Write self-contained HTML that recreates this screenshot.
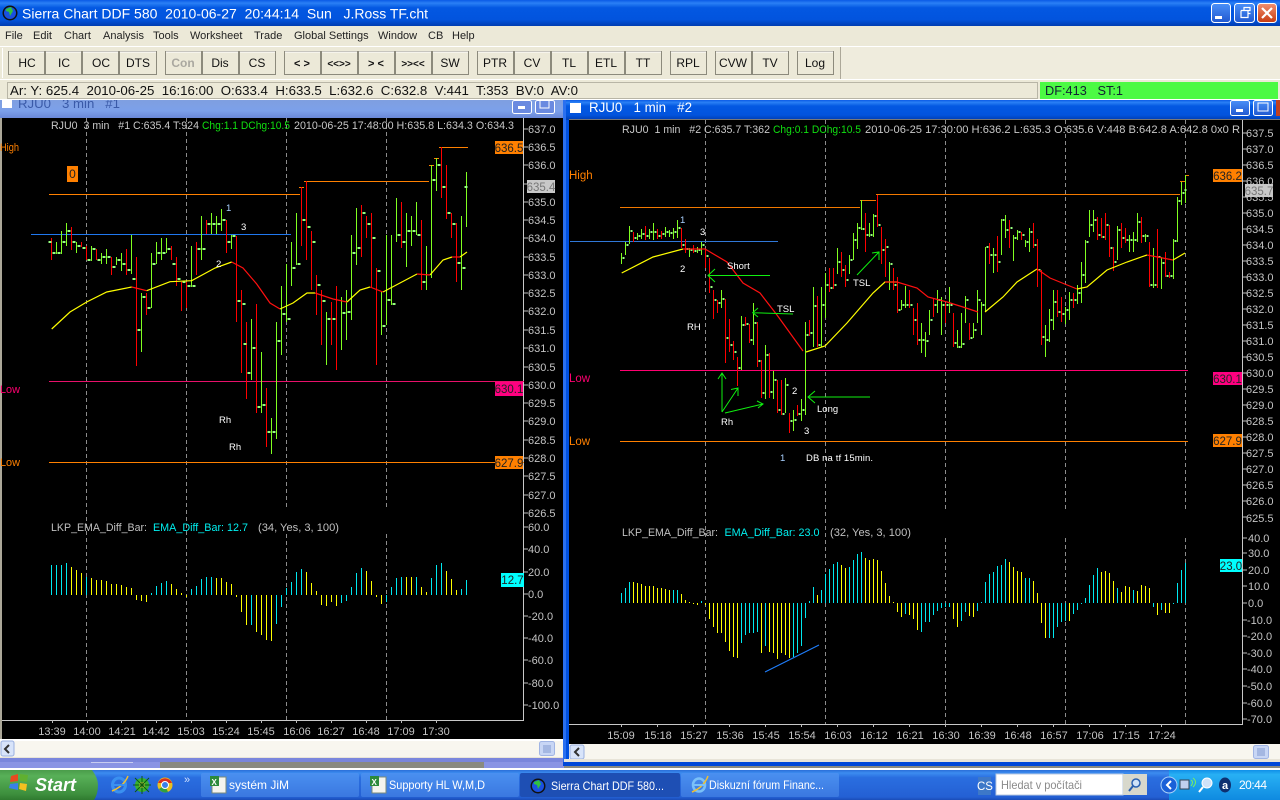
<!DOCTYPE html>
<html><head><meta charset="utf-8"><title>Sierra Chart</title>
<style>
html,body{margin:0;padding:0;background:#fff;overflow:hidden;width:1280px;height:800px}
svg{display:block;font-family:"Liberation Sans",sans-serif}
text{white-space:pre}
.a{font-size:11px;fill:#c4c4c4}
.t{font-size:11px;fill:#c4c4c4;text-anchor:middle}
.m{font-size:11px;fill:#222}
.b{font-size:12px;fill:#111;text-anchor:middle}
.w{font-size:9.5px;fill:#fff}
.tb{font-size:12px;fill:#fff}
.bx{font-size:11.5px;fill:#222;text-anchor:middle}
</style></head><body>
<svg width="1280" height="800" viewBox="0 0 1280 800" xmlns="http://www.w3.org/2000/svg">
<defs>
<linearGradient id="tg" x1="0" y1="0" x2="0" y2="1"><stop offset="0" stop-color="#0a5ae6"/><stop offset=".12" stop-color="#2a80f5"/><stop offset=".3" stop-color="#0358e2"/><stop offset=".75" stop-color="#0254de"/><stop offset="1" stop-color="#003cb0"/></linearGradient>
<linearGradient id="ti" x1="0" y1="0" x2="0" y2="1"><stop offset="0" stop-color="#7f9fe0"/><stop offset=".6" stop-color="#7ca0ea"/><stop offset="1" stop-color="#6a88d8"/></linearGradient>
<linearGradient id="tk" x1="0" y1="0" x2="0" y2="1"><stop offset="0" stop-color="#2a6ed8"/><stop offset=".1" stop-color="#3c8cf0"/><stop offset=".25" stop-color="#2a6ee0"/><stop offset=".9" stop-color="#2460d4"/><stop offset="1" stop-color="#1a4cb8"/></linearGradient>
<linearGradient id="st" x1="0" y1="0" x2="0" y2="1"><stop offset="0" stop-color="#4a9c4a"/><stop offset=".2" stop-color="#58b058"/><stop offset=".8" stop-color="#3d8f3d"/><stop offset="1" stop-color="#2f7a2f"/></linearGradient>
<linearGradient id="tr" x1="0" y1="0" x2="0" y2="1"><stop offset="0" stop-color="#0f8fe8"/><stop offset=".15" stop-color="#28b0f4"/><stop offset="1" stop-color="#0f8ae0"/></linearGradient>
<linearGradient id="bt" x1="0" y1="0" x2="0" y2="1"><stop offset="0" stop-color="#4a90f8"/><stop offset="1" stop-color="#2058d0"/></linearGradient>
<linearGradient id="cl" x1="0" y1="0" x2="0" y2="1"><stop offset="0" stop-color="#f09070"/><stop offset="1" stop-color="#c83a10"/></linearGradient>
<linearGradient id="tbn" x1="0" y1="0" x2="0" y2="1"><stop offset="0" stop-color="#4a90f0"/><stop offset="1" stop-color="#3a78e0"/></linearGradient>
</defs>

<rect width="1280" height="800" fill="#fff"/>
<!-- main frame -->
<rect x="0" y="0" width="1280" height="26" fill="url(#tg)"/>
<circle cx="10" cy="13" r="7.5" fill="#111"/><circle cx="10" cy="13" r="6" fill="#1a50e0"/><path d="M6 9l5-2 2 4-3 5-1-4-3-1z" fill="#30c040"/>
<text x="22" y="18.5" font-size="13.5" fill="#fff" textLength="406" lengthAdjust="spacingAndGlyphs">Sierra Chart DDF 580  2010-06-27  20:44:14  Sun   J.Ross TF.cht</text>
<g stroke="#fff" stroke-width="1">
<rect x="1211.5" y="3.5" width="19" height="19" rx="3" fill="url(#bt)"/>
<rect x="1234.5" y="3.5" width="20" height="19" rx="3" fill="url(#bt)"/>
<rect x="1257.5" y="3.5" width="19" height="19" rx="3" fill="url(#cl)"/>
</g>
<rect x="1215" y="16" width="7" height="3" fill="#fff"/>
<path d="M1241 10.500h9v-3h-6v3M1241 10.500v7h7v-7M1248 13.500h2.500" fill="none" stroke="#fff" stroke-width="1.200"/>
<path d="M1262 8l10 10M1272 8l-10 10" stroke="#fff" stroke-width="2.200"/>

<rect x="0" y="26" width="1280" height="20" fill="#ece9d8"/>
<g class="mm"><text class="m" x="5" y="39">File</text><text class="m" x="33" y="39">Edit</text><text class="m" x="64" y="39">Chart</text><text class="m" x="103" y="39">Analysis</text><text class="m" x="153" y="39">Tools</text><text class="m" x="190" y="39">Worksheet</text><text class="m" x="254" y="39">Trade</text><text class="m" x="294" y="39">Global Settings</text><text class="m" x="378" y="39">Window</text><text class="m" x="428" y="39">CB</text><text class="m" x="452" y="39">Help</text></g>

<rect x="0" y="46" width="1280" height="1" fill="#fff"/>
<rect x="0" y="47" width="1280" height="32" fill="#ece9d8"/>
<rect x="0" y="79" width="1280" height="1" fill="#fff"/>
<rect x="840" y="47" width="440" height="32" fill="#efecdd"/>
<rect x="840" y="47" width="1" height="32" fill="#aca899"/>
<rect x="2" y="48" width="1" height="30" fill="#fff"/>

<g fill="#ece9d8" stroke="#8c8a7c" stroke-width="1">
<path d="M8.500 51.500h36v23h-36z"/><path d="M45.500 51.500h36v23h-36z"/><path d="M82.500 51.500h36v23h-36z"/><path d="M119.500 51.500h37v23h-37z"/>
<path d="M165.500 51.500h36v23h-36z"/><path d="M202.500 51.500h36v23h-36z"/><path d="M239.500 51.500h36v23h-36z"/>
<path d="M284.500 51.500h36v23h-36z"/><path d="M321.500 51.500h36v23h-36z"/><path d="M358.500 51.500h36v23h-36z"/><path d="M395.500 51.500h36v23h-36z"/><path d="M432.500 51.500h36v23h-36z"/>
<path d="M477.500 51.500h36v23h-36z"/><path d="M514.500 51.500h36v23h-36z"/><path d="M551.500 51.500h36v23h-36z"/><path d="M588.500 51.500h36v23h-36z"/><path d="M625.500 51.500h36v23h-36z"/>
<path d="M670.500 51.500h36v23h-36z"/><path d="M715.500 51.500h36v23h-36z"/><path d="M752.500 51.500h36v23h-36z"/><path d="M797.500 51.500h36v23h-36z"/>
</g>
<path d="M9 52h35M46 52h35M83 52h35M120 52h36M166 52h35M203 52h35M240 52h35M285 52h35M322 52h35M359 52h35M396 52h35M433 52h35M478 52h35M515 52h35M552 52h35M589 52h35M626 52h35M671 52h35M716 52h35M753 52h35M798 52h35" stroke="#fff" stroke-width="1"/>
<text class="b" x="27" y="67">HC</text><text class="b" x="64" y="67">IC</text><text class="b" x="101" y="67">OC</text><text class="b" x="138" y="67">DTS</text>
<text class="b" x="183" y="67" style="fill:#aaa8a0;font-weight:bold">Con</text><text class="b" x="220" y="67">Dis</text><text class="b" x="257" y="67">CS</text>
<text class="b" x="302" y="67" style="font-weight:bold;font-size:11px">&lt; &gt;</text><text class="b" x="339" y="67" style="font-weight:bold;font-size:10px">&lt;&lt;&gt;&gt;</text><text class="b" x="376" y="67" style="font-weight:bold;font-size:11px">&gt; &lt;</text><text class="b" x="413" y="67" style="font-weight:bold;font-size:10px">&gt;&gt;&lt;&lt;</text><text class="b" x="450" y="67">SW</text>
<text class="b" x="495" y="67">PTR</text><text class="b" x="532" y="67">CV</text><text class="b" x="569" y="67">TL</text><text class="b" x="606" y="67">ETL</text><text class="b" x="643" y="67">TT</text>
<text class="b" x="688" y="67">RPL</text><text class="b" x="733" y="67">CVW</text><text class="b" x="770" y="67">TV</text><text class="b" x="815" y="67">Log</text>

<rect x="0" y="80" width="1280" height="20" fill="#ece9d8"/>
<rect x="7.500" y="82.500" width="1030" height="16" fill="#ece9d8" stroke="#b8b5a6"/>
<rect x="1040" y="82" width="238" height="17" fill="#4cfa44"/>
<rect x="0" y="99" width="1280" height="1" fill="#fff"/>
<text x="10" y="95" font-size="13" fill="#111" textLength="568" lengthAdjust="spacingAndGlyphs">Ar: Y: 625.4  2010-06-25  16:16:00  O:633.4  H:633.5  L:632.6  C:632.8  V:441  T:353  BV:0  AV:0</text>
<text x="1045" y="95" font-size="13" fill="#123" textLength="78" lengthAdjust="spacingAndGlyphs">DF:413   ST:1</text>

<!-- LEFT WINDOW -->
<rect x="0" y="100" width="564" height="668" fill="#8a8a80"/>
<rect x="0" y="100" width="564" height="18" fill="url(#ti)"/>
<clipPath id="c1"><rect x="0" y="100" width="564" height="18"/></clipPath>
<g clip-path="url(#c1)">
<rect x="2" y="100" width="10" height="8" fill="#fff"/>
<text x="18" y="108" font-size="13" fill="#3a5aa8" textLength="102" lengthAdjust="spacingAndGlyphs">RJU0   3 min   #1</text>
<rect x="512.500" y="100.500" width="19" height="13" rx="2" fill="#6a8ae0" stroke="#fff"/><rect x="518" y="106" width="7" height="3" fill="#fff"/>
<rect x="535.500" y="100.500" width="19" height="13" rx="2" fill="#6a8ae0" stroke="#fff"/><rect x="540" y="100" width="9" height="8" fill="none" stroke="#fff"/>
</g>
<rect x="0" y="118" width="2" height="622" fill="#aca899"/>
<rect x="2" y="118" width="562" height="621" fill="#000"/>
<rect x="0" y="739" width="564" height="18" fill="#f8f6ef"/>
<rect x="0" y="739" width="564" height="2" fill="#fff"/>
<rect x="1" y="741" width="13" height="15" rx="2" fill="#d8e4fa" stroke="#9ab0e0"/><path d="M9 745l-4 4 4 4" fill="none" stroke="#333" stroke-width="2"/>
<rect x="539.500" y="741.500" width="15" height="14" rx="2" fill="#c8d6f5" stroke="#a0b4e4"/><path d="M544 745v8M546 745v8M548 745v8M550 745v8" stroke="#8098d0"/>
<rect x="0" y="757" width="564" height="1" fill="#e8e4d8"/>
<rect x="0" y="758" width="564" height="4" fill="#7a86dc"/>
<rect x="0" y="762" width="160" height="6" fill="#8a94e4"/>
<rect x="484" y="762" width="80" height="6" fill="#8a94e4"/>
<rect x="91" y="762" width="42" height="1" fill="#c8ccf0"/>

<!-- left chart lines -->
<g shape-rendering="crispEdges">
<path d="M523.500 118V720M2 720.500H524" stroke="#c8c8c8" fill="none"/>
<path d="M524 129h4M524 147h4M524 165h4M524 184h4M524 202h4M524 220h4M524 238h4M524 257h4M524 275h4M524 293h4M524 311h4M524 330h4M524 348h4M524 367h4M524 385h4M524 403h4M524 421h4M524 440h4M524 458h4M524 476h4M524 495h4M524 513h4M524 527h4M524 549h4M524 572h4M524 594h4M524 616h4M524 638h4M524 660h4M524 683h4M524 705h4" stroke="#bbb"/>
<path d="M52.500 720v3M87.500 720v3M121.500 720v3M156.500 720v3M191.500 720v3M226.500 720v3M261.500 720v3M296.500 720v3M331.500 720v3M366.500 720v3M401.500 720v3M436.500 720v3" stroke="#bbb"/>
<path d="M86.500 118V720M186.500 118V720M286.500 118V510M286.500 534V720M386.500 118V510M386.500 534V720" stroke="#8c8c8c" stroke-dasharray="4 3"/>
<path d="M49 194.500H300M299 187.500h5M304 181.500H429M429 165.500h5M434 158.500h5M439 147.500h29" stroke="#ff8000" fill="none"/>
<path d="M306.500 181V260" stroke="#ff8000"/>
<path d="M31 234.500H291" stroke="#2078f0"/>
<path d="M49 381.500H524" stroke="#e8106a"/>
<path d="M49 462.500H524" stroke="#ff8000"/>
</g>
<g transform="translate(.5 0)" shape-rendering="crispEdges" fill="none">
<path stroke="#ff0000" d="M51 238V260M71 227V250M81 242V247M86 246V260M96 249V260M111 257V275M126 249V275M136 257V366M146 293V315M171 246V260M176 257V286M181 282V311M186 282V308M196 242V275M206 220V234M226 220V253M236 236V322M241 290V373M246 322V399M256 304V413M266 388V447M301 187V246M306 181V260M311 231V290M316 275V315M321 290V345M331 302V345M336 286V370M361 205V257M366 216V238M371 213V287M376 268V365M401 202V248M421 220V290M441 147V198M446 165V219M451 213V238M456 223V282"/>
<path stroke="#80ff20" d="M56 242V254M61 231V254M66 223V246M76 242V253M91 246V261M101 253V264M106 249V264M116 257V265M121 253V271M131 235V274M141 293V352M151 253V308M156 242V264M161 238V260M166 238V253M191 246V287M201 216V260M211 213V234M216 216V234M221 209V231M231 235V249M251 319V380M261 352V413M271 418V454M276 322V439M281 286V355M286 264V322M291 242V286M296 213V265M326 312V365M341 297V350M346 290V340M351 235V320M356 208V265M381 292V335M386 235V325M391 235V305M396 198V242M406 213V267M411 216V246M416 202V235M426 246V290M431 165V278M436 158V191M461 216V290M466 172V227"/>
<path stroke="#96ff80" stroke-width="2" d="M48 242h3M52 253h3M57 253h3M62 242h3M67 231h3M72 242h3M77 246h3M82 248h3M87 260h3M92 249h3M97 260h3M102 257h3M107 257h3M112 267h3M117 260h3M122 264h3M127 270h3M132 279h3M137 330h3M142 297h3M147 308h3M152 264h3M157 253h3M162 253h3M167 249h3M172 264h3M177 279h3M182 282h3M187 286h3M192 286h3M197 249h3M202 249h3M207 224h3M212 224h3M217 224h3M222 220h3M227 242h3M232 236h3M237 301h3M242 304h3M243 344h3M247 373h3M252 348h3M257 407h3M262 405h3M267 432h3M272 432h3M277 341h3M282 314h3M287 319h3M292 268h3M297 264h3M302 220h3M307 227h3M312 242h3M317 285h3M322 301h3M327 319h3M332 319h3M342 313h3M347 312h3M352 253h3M357 248h3M362 213h3M367 224h3M372 238h3M377 271h3M382 326h3M387 300h3M392 304h3M397 235h3M402 242h3M407 231h3M412 231h3M417 235h3M422 282h3M432 180h3M437 165h3M442 187h3M447 213h3M452 224h3M457 263h3M462 268h3M467 187h-3"/>
</g>
<!-- left EMA -->
<g fill="none" stroke-width="1.200">
<path stroke="#ffff00" d="M51.700 329L70 312L86.700 302L106.700 292L131.700 287"/>
<path stroke="#ff1010" d="M131.700 287L146.700 290.700"/>
<path stroke="#ffff00" d="M146.700 290.700L170 281.700L191.700 280.700L215 268L231.700 262"/>
<path stroke="#ff1010" d="M231.700 262L243 268L256.700 284L270 303L280 309"/>
<path stroke="#ffff00" d="M280 309L293 303L307 293L315 293"/>
<path stroke="#ff1010" d="M315 293L333 299L347 302"/>
<path stroke="#ffff00" d="M347 302L360 290L370 287"/>
<path stroke="#ff1010" d="M370 287L383 292"/>
<path stroke="#ffff00" d="M383 292L417 274"/>
<path stroke="#ff1010" d="M417 274L430 275"/>
<path stroke="#ffff00" d="M430 275L443 260L452 257"/>
<path stroke="#ff1010" d="M452 257L460 257"/>
<path stroke="#ffff00" d="M460 257L467 252"/>
</g>
<!-- left indicator -->
<g transform="translate(.5 0)" shape-rendering="crispEdges" fill="none">
<path stroke="#00e8f0" d="M51 595V565M56 595V565M61 595V565M66 595V563M86 595V577M151 595V593M156 595V586M161 595V583M166 595V581M191 595V589M196 595V586M201 595V579M206 595V577M211 595V577M251 595V625M276 595V624M281 595V607M286 595V588M291 595V582M296 595V572M301 595V569M341 595V603M346 595V601M351 595V587M356 595V573M361 595V568M386 595V602M391 595V587M396 595V578M401 595V577M416 595V577M431 595V578M436 595V565M441 595V563M461 595V589M466 595V580"/>
<path stroke="#ffff00" d="M71 595V567M76 595V570M81 595V573M91 595V578M96 595V580M101 595V580M106 595V581M111 595V584M116 595V584M121 595V585M126 595V587M131 595V588M136 595V600M141 595V601M146 595V602M171 595V584M176 595V589M181 595V593M186 595V597M216 595V578M221 595V578M226 595V582M231 595V584M236 595V597M241 595V612M246 595V625M256 595V632M261 595V635M266 595V640M271 595V641M306 595V572M311 595V583M316 595V591M321 595V605M326 595V606M331 595V602M336 595V606M366 595V571M371 595V581M376 595V597M381 595V604M406 595V577M411 595V577M421 595V587M426 595V592M446 595V571M451 595V579M456 595V590"/>
</g>
<!-- left texts -->
<text x="51" y="129" font-size="11" fill="#c8c8c8" textLength="148" lengthAdjust="spacingAndGlyphs">RJU0  3 min   #1 C:635.4 T:924</text>
<text x="202" y="129" font-size="11" fill="#10e010" textLength="88" lengthAdjust="spacingAndGlyphs">Chg:1.1 DChg:10.5</text>
<text x="294" y="129" font-size="11" fill="#c8c8c8" textLength="220" lengthAdjust="spacingAndGlyphs">2010-06-25 17:48:00 H:635.8 L:634.3 O:634.3</text>
<text x="0" y="151" font-size="11" fill="#ff8000" textLength="19" lengthAdjust="spacingAndGlyphs">High</text>
<text x="0" y="393" font-size="11" fill="#ff0070" textLength="20" lengthAdjust="spacingAndGlyphs">Low</text>
<text x="0" y="466" font-size="11" fill="#ff8000" textLength="20" lengthAdjust="spacingAndGlyphs">Low</text>
<rect x="67" y="166" width="11" height="16" fill="#ff8000"/><text x="72.500" y="178" font-size="12" fill="#222" text-anchor="middle">0</text>
<text class="w" x="226" y="211" style="fill:#a8d0ff">1</text><text class="w" x="241" y="230">3</text><text class="w" x="216" y="267">2</text><text class="w" x="219" y="423">Rh</text><text class="w" x="229" y="450">Rh</text>
<text x="51" y="531" font-size="11" fill="#c0c0c0" textLength="96" lengthAdjust="spacingAndGlyphs">LKP_EMA_Diff_Bar:</text>
<text x="153" y="531" font-size="11" fill="#00f0f0" textLength="95" lengthAdjust="spacingAndGlyphs">EMA_Diff_Bar: 12.7</text>
<text x="258" y="531" font-size="11" fill="#c0c0c0" textLength="81" lengthAdjust="spacingAndGlyphs">(34, Yes, 3, 100)</text>
<g>
<text class="a" x="528" y="133">637.0</text><text class="a" x="528" y="151">636.5</text><text class="a" x="528" y="169">636.0</text><text class="a" x="528" y="206">635.0</text><text class="a" x="528" y="224">634.5</text><text class="a" x="528" y="242">634.0</text><text class="a" x="528" y="261">633.5</text><text class="a" x="528" y="279">633.0</text><text class="a" x="528" y="297">632.5</text><text class="a" x="528" y="315">632.0</text><text class="a" x="528" y="334">631.5</text><text class="a" x="528" y="352">631.0</text><text class="a" x="528" y="371">630.5</text><text class="a" x="528" y="389">630.0</text><text class="a" x="528" y="407">629.5</text><text class="a" x="528" y="425">629.0</text><text class="a" x="528" y="444">628.5</text><text class="a" x="528" y="462">628.0</text><text class="a" x="528" y="480">627.5</text><text class="a" x="528" y="499">627.0</text><text class="a" x="528" y="517">626.5</text>
<text class="a" x="528" y="531">60.0</text><text class="a" x="528" y="553">40.0</text><text class="a" x="528" y="576">20.0</text><text class="a" x="528" y="598">0.0</text><text class="a" x="528" y="620">-20.0</text><text class="a" x="528" y="642">-40.0</text><text class="a" x="528" y="664">-60.0</text><text class="a" x="528" y="687">-80.0</text><text class="a" x="528" y="709">-100.0</text>
</g>
<rect x="495" y="141" width="28" height="13" fill="#ff8000"/><text class="bx" x="509" y="152">636.5</text>
<rect x="527" y="180" width="28" height="13" fill="#c8c8c8"/><text class="bx" x="541" y="191" style="fill:#777">635.4</text>
<rect x="495" y="382" width="28" height="14" fill="#ff0080"/><text class="bx" x="509" y="393">630.1</text>
<rect x="495" y="456" width="28" height="13" fill="#ff8000"/><text class="bx" x="509" y="467">627.9</text>
<rect x="501" y="573" width="23" height="14" fill="#00ffff"/><text class="bx" x="512.500" y="584">12.7</text>
<g>
<text class="t" x="52" y="735">13:39</text><text class="t" x="87" y="735">14:00</text><text class="t" x="122" y="735">14:21</text><text class="t" x="156" y="735">14:42</text><text class="t" x="191" y="735">15:03</text><text class="t" x="226" y="735">15:24</text><text class="t" x="261" y="735">15:45</text><text class="t" x="297" y="735">16:06</text><text class="t" x="331" y="735">16:27</text><text class="t" x="366" y="735">16:48</text><text class="t" x="401" y="735">17:09</text><text class="t" x="436" y="735">17:30</text>
</g>

<!-- RIGHT WINDOW -->
<rect x="563" y="100" width="717" height="666" fill="#0050e0"/>
<rect x="563" y="100" width="717" height="20" fill="url(#tg)"/>
<rect x="563" y="100" width="3" height="666" fill="#2a70f0"/>
<rect x="570" y="103" width="11" height="10" fill="#fff"/>
<text x="589" y="112" font-size="13.5" fill="#fff" textLength="103" lengthAdjust="spacingAndGlyphs">RJU0   1 min   #2</text>
<rect x="1230.500" y="100.500" width="19" height="15" rx="2" fill="url(#bt)" stroke="#fff"/><rect x="1236" y="109" width="7" height="3" fill="#fff"/>
<rect x="1253.500" y="100.500" width="19" height="15" rx="2" fill="url(#bt)" stroke="#fff"/><rect x="1258" y="103" width="10" height="8" fill="none" stroke="#fff"/>
<rect x="1276" y="100" width="4" height="16" fill="#c04020"/>
<rect x="569" y="120" width="711" height="624" fill="#000"/>
<rect x="569" y="119" width="711" height="1" fill="#777"/>
<rect x="569" y="744" width="711" height="15" fill="#f8f6ef"/>
<rect x="570" y="745" width="14" height="14" rx="2" fill="#d8e4fa" stroke="#9ab0e0"/><path d="M579 748l-4 4 4 4" fill="none" stroke="#333" stroke-width="2"/>
<rect x="1253.500" y="745.500" width="15" height="13" rx="2" fill="#c8d6f5" stroke="#a0b4e4"/><path d="M1258 748v8M1260 748v8M1262 748v8M1264 748v8" stroke="#8098d0"/>
<rect x="563" y="762" width="717" height="4" fill="#0048d8"/>
<rect x="564" y="759" width="716" height="3" fill="#e8e4d8"/>
<rect x="564" y="766" width="716" height="2" fill="#8a8a80"/>

<g shape-rendering="crispEdges">
<path d="M1242.500 120V724M569 724.500H1243" stroke="#c8c8c8" fill="none"/>
<path d="M1243 133h4M1243 149h4M1243 165h4M1243 181h4M1243 197h4M1243 213h4M1243 229h4M1243 245h4M1243 261h4M1243 277h4M1243 293h4M1243 309h4M1243 325h4M1243 341h4M1243 357h4M1243 373h4M1243 389h4M1243 405h4M1243 421h4M1243 437h4M1243 453h4M1243 469h4M1243 485h4M1243 501h4M1243 517h4M1243 538h4M1243 553h4M1243 570h4M1243 586h4M1243 603h4M1243 620h4M1243 636h4M1243 653h4M1243 669h4M1243 686h4M1243 703h4M1243 719h4" stroke="#bbb"/>
<path d="M621.500 724v3M657.500 724v3M693.500 724v3M729.500 724v3M765.500 724v3M801.500 724v3M837.500 724v3M873.500 724v3M909.500 724v3M945.500 724v3M981.500 724v3M1017.500 724v3M1053.500 724v3M1089.500 724v3M1125.500 724v3M1161.500 724v3" stroke="#bbb"/>
<path d="M705.500 120V724M825.500 120V724M945.500 120V511M945.500 538V724M1065.500 120V511M1065.500 538V724M1185.500 120V511M1185.500 538V724" stroke="#8c8c8c" stroke-dasharray="4 3"/>
<path d="M620 207.500H860M860 200.500h16M876 194.500H1180M1180 181.500h5M1185 175.500h4" stroke="#ff8000" stroke-opacity=".95" fill="none"/>
<path d="M570 241.500H778" stroke="#3078d8"/>
<path d="M620 370.500H1188" stroke="#ff0070"/>
<path d="M620 441.500H1188" stroke="#ff8000"/>
</g>
<g transform="translate(.5 0)" shape-rendering="crispEdges" fill="none">
<path stroke="#ff0000" d="M633 232V242M645 226V240M657 229V239M661 231V239M681 228V248M685 239V253M693 245V253M705 249V268M709 258V293M713 290V319M717 300V313M725 299V363M729 319V352M733 341V360M737 357V386M745 317V326M749 324V343M757 322V367M761 360V398M769 353V398M777 380V413M781 380V415M789 413V433M797 405V416M809 320V336M817 296V347M829 268V292M833 268V289M841 252V277M845 265V287M865 213V252M877 195V227M881 227V264M885 239V277M893 268V290M897 277V313M909 290V308M913 308V335M917 303V345M933 299V317M945 303V323M953 313V347M969 323V340M989 243V264M997 236V272M1009 220V248M1021 232V240M1033 223V248M1037 239V287M1041 270V345M1057 290V317M1061 297V322M1073 293V308M1097 217V240M1101 218V238M1105 213V240M1109 225V257M1113 247V271M1121 223V248M1125 228V243M1141 217V243M1149 242V287M1157 229V288M1165 252V277M1169 272V278"/>
<path stroke="#80ff20" d="M621 253V264M625 242V255M629 226V244M637 233V240M641 229V239M649 229V239M653 223V240M665 227V237M669 230V237M673 228V239M677 220V238M689 248V257M697 247V253M701 242V255M721 290V308M741 316V370M753 303V345M765 345V399M773 371V399M785 378V413M793 410V431M801 399V421M805 322V415M813 287V347M821 287V347M825 273V318M837 248V274M849 255V274M853 233V260M857 223V249M861 200V230M869 223V237M873 214V237M889 262V290M901 300V310M905 286V308M921 323V353M925 332V357M929 310V335M937 290V313M941 297V335M949 287V313M957 330V348M961 313V348M965 296V323M973 323V338M977 290V323M981 302V335M985 247V312M993 248V273M1001 219V255M1005 215V238M1013 235V261M1017 230V240M1025 240V247M1029 228V252M1045 325V357M1049 309V342M1053 290V330M1065 307V324M1069 292V320M1077 285V304M1081 262V303M1085 240V283M1089 210V237M1093 210V232M1117 226V260M1129 235V252M1133 232V252M1137 213V242M1145 234V242M1153 248V288M1161 257V289M1173 239V279M1177 197V242M1181 182V205M1185 175V203"/>
<path stroke="#96ff80" stroke-width="2" d="M622 258h2M626 245h2M630 231h2M634 238h2M638 236h2M642 234h2M646 236h2M650 232h2M654 232h2M658 236h2M662 234h2M666 232h2M670 233h2M674 232h2M678 228h2M682 245h2M686 249h2M690 250h2M694 251h2M698 250h2M702 245h2M706 256h2M710 287h2M714 300h2M718 303h2M722 299h2M726 338h2M730 345h2M734 352h2M738 368h2M742 325h2M746 324h2M750 340h2M754 323h2M758 361h2M762 393h2M766 355h2M770 392h2M774 380h2M778 410h2M782 414h2M786 385h2M790 421h2M794 420h2M798 414h2M802 410h2M806 335h2M810 333h2M814 306h2M818 345h2M822 305h2M826 285h2M830 288h2M834 285h2M838 262h2M842 270h2M846 280h2M850 260h2M854 240h2M858 228h2M862 229h2M866 235h2M870 235h2M874 216h2M878 225h2M882 250h2M886 247h2M890 264h2M894 285h2M898 310h2M902 305h2M906 305h2M910 305h2M914 320h2M918 340h2M922 340h2M926 341h2M930 320h2M934 305h2M938 300h2M942 305h2M946 305h2M950 305h2M954 343h2M958 347h2M962 344h2M966 300h2M970 338h2M974 330h2M978 300h2M982 305h2M986 247h2M990 255h2M994 255h2M998 262h2M1002 220h2M1006 230h2M1010 228h2M1014 238h2M1018 232h2M1022 235h2M1026 242h2M1030 232h2M1034 245h2M1038 270h2M1042 337h2M1046 340h2M1050 320h2M1054 302h2M1058 312h2M1062 314h2M1066 310h2M1070 300h2M1074 300h2M1078 293h2M1082 275h2M1086 242h2M1090 225h2M1094 220h2M1098 235h2M1102 237h2M1106 225h2M1110 248h2M1114 262h2M1118 230h2M1122 238h2M1126 240h2M1130 240h2M1134 240h2M1138 222h2M1142 236h2M1146 236h2M1150 285h2M1154 285h2M1158 257h2M1162 263h2M1166 276h2M1170 276h2M1174 241h2M1178 201h2M1182 193h2M1186 190h-2"/>
</g>
<g fill="none" stroke-width="1.200">
<path stroke="#ffff00" d="M621.700 273L653 257L683 249"/>
<path stroke="#ff1010" d="M683 249L705 249L727 262L743 283L760 293L777 315L803 351"/>
<path stroke="#ffff00" d="M806 352L825 346L847 323L873 293L885 282L897 282"/>
<path stroke="#ff1010" d="M885 282L897 282L917 288L928 297L947 302L963 307L978 312"/>
<path stroke="#ffff00" d="M985 312L1003 297L1017 282L1037 269"/>
<path stroke="#ff1010" d="M1037 269L1050 278L1077 289"/>
<path stroke="#ffff00" d="M1077 289L1087 287L1107 270L1127 262L1147 255"/>
<path stroke="#ff1010" d="M1147 255L1173 260"/>
<path stroke="#ffff00" d="M1173 260L1185 253"/>
</g>
<!-- right annotations -->
<g fill="none" stroke="#10f010" stroke-width="1">
<path d="M708 275.500H770M715 269L708 275.500L715 282"/>
<path d="M752.700 312.700L793 314M758 308L752.700 312.700L758 317"/>
<path d="M808 397H870M815 391L808 397L815 403"/>
<path d="M722 412V373M718 379L722 373L726 379"/>
<path d="M722 412L738 388M731 389.500L738 388L738 396"/>
<path d="M725 413L763 404M757 401L763 404L758 408"/>
<path d="M857 275L879 252M872 253L879 252L879 260"/>
</g>
<text x="622" y="133" font-size="11" fill="#c8c8c8" textLength="148" lengthAdjust="spacingAndGlyphs">RJU0  1 min   #2 C:635.7 T:362</text>
<text x="773" y="133" font-size="11" fill="#10e010" textLength="88" lengthAdjust="spacingAndGlyphs">Chg:0.1 DChg:10.5</text>
<text x="865" y="133" font-size="11" fill="#c8c8c8" textLength="375" lengthAdjust="spacingAndGlyphs">2010-06-25 17:30:00 H:636.2 L:635.3 O:635.6 V:448 B:642.8 A:642.8 0x0 R</text>
<text x="569" y="179" font-size="11.500" fill="#ff8000">High</text>
<text x="569" y="382" font-size="11.500" fill="#ff0070">Low</text>
<text x="569" y="445" font-size="11.500" fill="#ff8000">Low</text>
<text class="w" x="680" y="223" style="fill:#a8d0ff">1</text><text class="w" x="700" y="235">3</text><text class="w" x="680" y="272">2</text>
<text class="w" x="727" y="269">Short</text><text class="w" x="777" y="312">TSL</text><text class="w" x="687" y="330">RH</text><text class="w" x="792" y="394">2</text><text class="w" x="817" y="412">Long</text><text class="w" x="804" y="434">3</text><text class="w" x="721" y="425">Rh</text><text class="w" x="780" y="461" style="fill:#a8d0ff">1</text><text class="w" x="806" y="461" textLength="67">DB na tf 15min.</text><text class="w" x="853" y="286">TSL</text>
<path d="M765 672L819 645" stroke="#2080ff" stroke-width="1" fill="none"/>
<g transform="translate(.5 0)" shape-rendering="crispEdges" fill="none">
<path stroke="#00e8f0" d="M621 603V593M625 603V588M629 603V582M673 603V590M677 603V590M701 603V601M741 603V643M745 603V635M749 603V633M753 603V633M757 603V632M765 603V646M793 603V657M797 603V653M801 603V646M805 603V618M809 603V601M813 603V587M821 603V590M825 603V574M829 603V569M833 603V564M837 603V562M849 603V567M853 603V560M857 603V554M861 603V552M905 603V614M921 603V632M925 603V622M929 603V622M933 603V615M937 603V611M941 603V608M945 603V607M949 603V607M961 603V621M965 603V612M977 603V611M981 603V602M985 603V582M989 603V574M993 603V572M997 603V566M1001 603V565M1005 603V559M1025 603V578M1029 603V578M1049 603V638M1053 603V638M1057 603V627M1061 603V622M1065 603V621M1073 603V614M1077 603V610M1081 603V604M1085 603V598M1089 603V585M1093 603V575M1097 603V568M1117 603V588M1133 603V590M1153 603V607M1161 603V610M1173 603V604M1177 603V583M1181 603V570M1185 603V563"/>
<path stroke="#ffff00" d="M633 603V582M637 603V583M641 603V584M645 603V586M649 603V586M653 603V586M657 603V588M661 603V588M665 603V589M669 603V590M681 603V594M685 603V600M689 603V602M693 603V604M697 603V605M705 603V605M709 603V619M713 603V627M717 603V633M721 603V633M725 603V642M729 603V651M733 603V657M737 603V658M761 603V653M769 603V652M773 603V653M777 603V659M781 603V653M785 603V655M789 603V658M817 603V595M841 603V565M845 603V568M865 603V558M869 603V560M873 603V559M877 603V560M881 603V571M885 603V583M889 603V596M893 603V602M897 603V612M901 603V617M909 603V615M913 603V619M917 603V630M953 603V619M957 603V627M969 603V616M973 603V617M1009 603V562M1013 603V567M1017 603V571M1021 603V572M1033 603V581M1037 603V593M1041 603V623M1045 603V638M1069 603V621M1101 603V572M1105 603V571M1109 603V573M1113 603V581M1121 603V592M1125 603V586M1129 603V587M1137 603V591M1141 603V585M1145 603V586M1149 603V588M1157 603V615M1165 603V613M1169 603V613"/>
</g>
<text x="622" y="536" font-size="11" fill="#c0c0c0" textLength="96" lengthAdjust="spacingAndGlyphs">LKP_EMA_Diff_Bar:</text>
<text x="724.500" y="536" font-size="11" fill="#00f0f0" textLength="95" lengthAdjust="spacingAndGlyphs">EMA_Diff_Bar: 23.0</text>
<text x="830" y="536" font-size="11" fill="#c0c0c0" textLength="81" lengthAdjust="spacingAndGlyphs">(32, Yes, 3, 100)</text>
<g>
<text class="a" x="1246" y="137">637.5</text><text class="a" x="1246" y="153">637.0</text><text class="a" x="1246" y="169">636.5</text><text class="a" x="1246" y="185">636.0</text><text class="a" x="1246" y="201">635.5</text><text class="a" x="1246" y="217">635.0</text><text class="a" x="1246" y="233">634.5</text><text class="a" x="1246" y="249">634.0</text><text class="a" x="1246" y="265">633.5</text><text class="a" x="1246" y="281">633.0</text><text class="a" x="1246" y="297">632.5</text><text class="a" x="1246" y="313">632.0</text><text class="a" x="1246" y="329">631.5</text><text class="a" x="1246" y="345">631.0</text><text class="a" x="1246" y="361">630.5</text><text class="a" x="1246" y="377">630.0</text><text class="a" x="1246" y="393">629.5</text><text class="a" x="1246" y="409">629.0</text><text class="a" x="1246" y="425">628.5</text><text class="a" x="1246" y="441">628.0</text><text class="a" x="1246" y="457">627.5</text><text class="a" x="1246" y="473">627.0</text><text class="a" x="1246" y="489">626.5</text><text class="a" x="1246" y="505">626.0</text><text class="a" x="1246" y="522">625.5</text>
<text class="a" x="1248" y="542">40.0</text><text class="a" x="1248" y="557">30.0</text><text class="a" x="1248" y="574">20.0</text><text class="a" x="1248" y="590">10.0</text><text class="a" x="1248" y="607">0.0</text><text class="a" x="1247" y="624">-10.0</text><text class="a" x="1247" y="640">-20.0</text><text class="a" x="1247" y="657">-30.0</text><text class="a" x="1247" y="673">-40.0</text><text class="a" x="1247" y="690">-50.0</text><text class="a" x="1247" y="707">-60.0</text><text class="a" x="1247" y="723">-70.0</text>
</g>
<rect x="1213" y="169" width="29" height="13" fill="#ff8000"/><text class="bx" x="1227.500" y="180">636.2</text>
<rect x="1245" y="184" width="28" height="13" fill="#c8c8c8"/><text class="bx" x="1259" y="195" style="fill:#777">635.7</text>
<rect x="1213" y="372" width="29" height="13" fill="#ff0080"/><text class="bx" x="1227.500" y="383">630.1</text>
<rect x="1213" y="434" width="29" height="13" fill="#ff8000"/><text class="bx" x="1227.500" y="445">627.9</text>
<rect x="1220" y="559" width="22" height="13" fill="#00ffff"/><text class="bx" x="1231" y="570">23.0</text>
<g>
<text class="t" x="621" y="739">15:09</text><text class="t" x="658" y="739">15:18</text><text class="t" x="694" y="739">15:27</text><text class="t" x="730" y="739">15:36</text><text class="t" x="766" y="739">15:45</text><text class="t" x="802" y="739">15:54</text><text class="t" x="838" y="739">16:03</text><text class="t" x="874" y="739">16:12</text><text class="t" x="910" y="739">16:21</text><text class="t" x="946" y="739">16:30</text><text class="t" x="982" y="739">16:39</text><text class="t" x="1018" y="739">16:48</text><text class="t" x="1054" y="739">16:57</text><text class="t" x="1090" y="739">17:06</text><text class="t" x="1126" y="739">17:15</text><text class="t" x="1162" y="739">17:24</text>
</g>

<!-- TASKBAR -->
<rect x="0" y="768" width="1280" height="2" fill="#fff"/>
<rect x="0" y="770" width="1280" height="30" fill="url(#tk)"/>
<path d="M0 770H92Q98 778 98 785Q98 794 94 800H0z" fill="url(#st)"/>
<path d="M11 776l7-2v7l-8 1z" fill="#e84a20"/><path d="M20 774l8 1-1 7-7-1z" fill="#60b030"/><path d="M10 784l8-1v7l-9-2z" fill="#3a80e8"/><path d="M20 783l7 1-1 7-7-2z" fill="#f4c020"/>
<text x="35" y="791" font-size="18" font-weight="bold" font-style="italic" fill="#fff">Start</text>
<ellipse cx="119" cy="785" rx="6.500" ry="7" fill="none" stroke="#3a90f0" stroke-width="3"/><path d="M112 791Q124 786 128 776" stroke="#f0c030" stroke-width="1.500" fill="none"/><path d="M114 785h10" stroke="#3a90f0" stroke-width="2"/>
<circle cx="142" cy="785" r="7" fill="#3ab030"/><circle cx="142" cy="785" r="3" fill="#f0e040"/><path d="M135 778l14 14M149 778l-14 14M142 776v18M133 785h18" stroke="#0a5a10" stroke-width="1"/>
<circle cx="165" cy="785" r="7.500" fill="#e8c020"/><path d="M158 783A7.500 7.500 0 0 1 172 783L165 783z" fill="#d83020"/><path d="M159 789A7.500 7.500 0 0 0 168 792L165 785z" fill="#30a040"/><circle cx="165" cy="785" r="3.500" fill="#3a80e8" stroke="#fff"/>
<text x="184" y="783" font-size="11" fill="#cfe0ff">»</text>

<rect x="201" y="773" width="158" height="24" rx="2" fill="url(#tbn)"/>
<rect x="361" y="773" width="158" height="24" rx="2" fill="url(#tbn)"/>
<rect x="520" y="773" width="160" height="24" rx="2" fill="#1e4fb4"/>
<rect x="681" y="773" width="158" height="24" rx="2" fill="url(#tbn)"/>
<rect x="212" y="777" width="14" height="16" fill="#f4f4ee" stroke="#7a8a7a"/><rect x="210" y="776" width="9" height="10" fill="#2c8a3c"/><text x="211.500" y="785" font-size="8" font-weight="bold" fill="#fff">X</text>
<rect x="372" y="777" width="14" height="16" fill="#f4f4ee" stroke="#7a8a7a"/><rect x="370" y="776" width="9" height="10" fill="#2c8a3c"/><text x="371.500" y="785" font-size="8" font-weight="bold" fill="#fff">X</text>
<circle cx="538" cy="786" r="7.500" fill="#111"/><circle cx="538" cy="786" r="6" fill="#1a50e0"/><path d="M534 782l5-2 2 4-3 5-1-4-3-1z" fill="#30c040"/>
<ellipse cx="699" cy="785" rx="6" ry="6.500" fill="none" stroke="#7ac0f8" stroke-width="2.500"/><path d="M692 792Q704 787 708 776" stroke="#f0c030" stroke-width="1.500" fill="none"/><path d="M694 785h10" stroke="#7ac0f8" stroke-width="2"/>
<text class="tb" x="229" y="789">systém JiM</text>
<text class="tb" x="389" y="789" textLength="96" lengthAdjust="spacingAndGlyphs">Supporty HL W,M,D</text>
<text class="tb" x="551" y="790" textLength="113" lengthAdjust="spacingAndGlyphs">Sierra Chart DDF 580...</text>
<text class="tb" x="709" y="789" textLength="115" lengthAdjust="spacingAndGlyphs">Diskuzní fórum Financ...</text>

<rect x="978" y="777" width="13" height="18" fill="#3d78c8"/><text class="tb" x="977" y="790" style="font-size:11.500px">CS</text>
<rect x="996" y="774" width="127" height="21" fill="#fff" stroke="#b8c8e0"/>
<text x="1001" y="789" font-size="12" fill="#8a8a8a" textLength="81" lengthAdjust="spacingAndGlyphs">Hledat v počítači</text>
<rect x="1123" y="774" width="24" height="21" fill="#d8d8cc"/>
<circle cx="1136" cy="783" r="4" fill="#cfe2f8" stroke="#2a60b0" stroke-width="1.500"/><path d="M1133 786l-4 5" stroke="#2a60b0" stroke-width="2"/>
<rect x="1169" y="770" width="111" height="30" fill="url(#tr)"/>
<circle cx="1169" cy="785" r="8" fill="#1a60d8" stroke="#a8d0f8"/><path d="M1171 781l-4 4 4 4" fill="none" stroke="#fff" stroke-width="2"/>
<rect x="1180" y="780" width="9" height="9" fill="#c0d0ee" stroke="#345"/><path d="M1191 780q3 2 0 6M1193 778q5 4 0 9" stroke="#7cf060" fill="none"/>
<circle cx="1207" cy="783" r="5" fill="#cfe2f8" stroke="#fff"/><path d="M1203 787l-4 5" stroke="#fff" stroke-width="2"/>
<ellipse cx="1225" cy="785" rx="6" ry="7.500" fill="#0e2f70"/><text x="1225" y="789" font-size="11" font-weight="bold" fill="#fff" text-anchor="middle">a</text>
<text x="1239" y="789" font-size="12" fill="#fff" textLength="28">20:44</text>
</svg>
</body></html>
